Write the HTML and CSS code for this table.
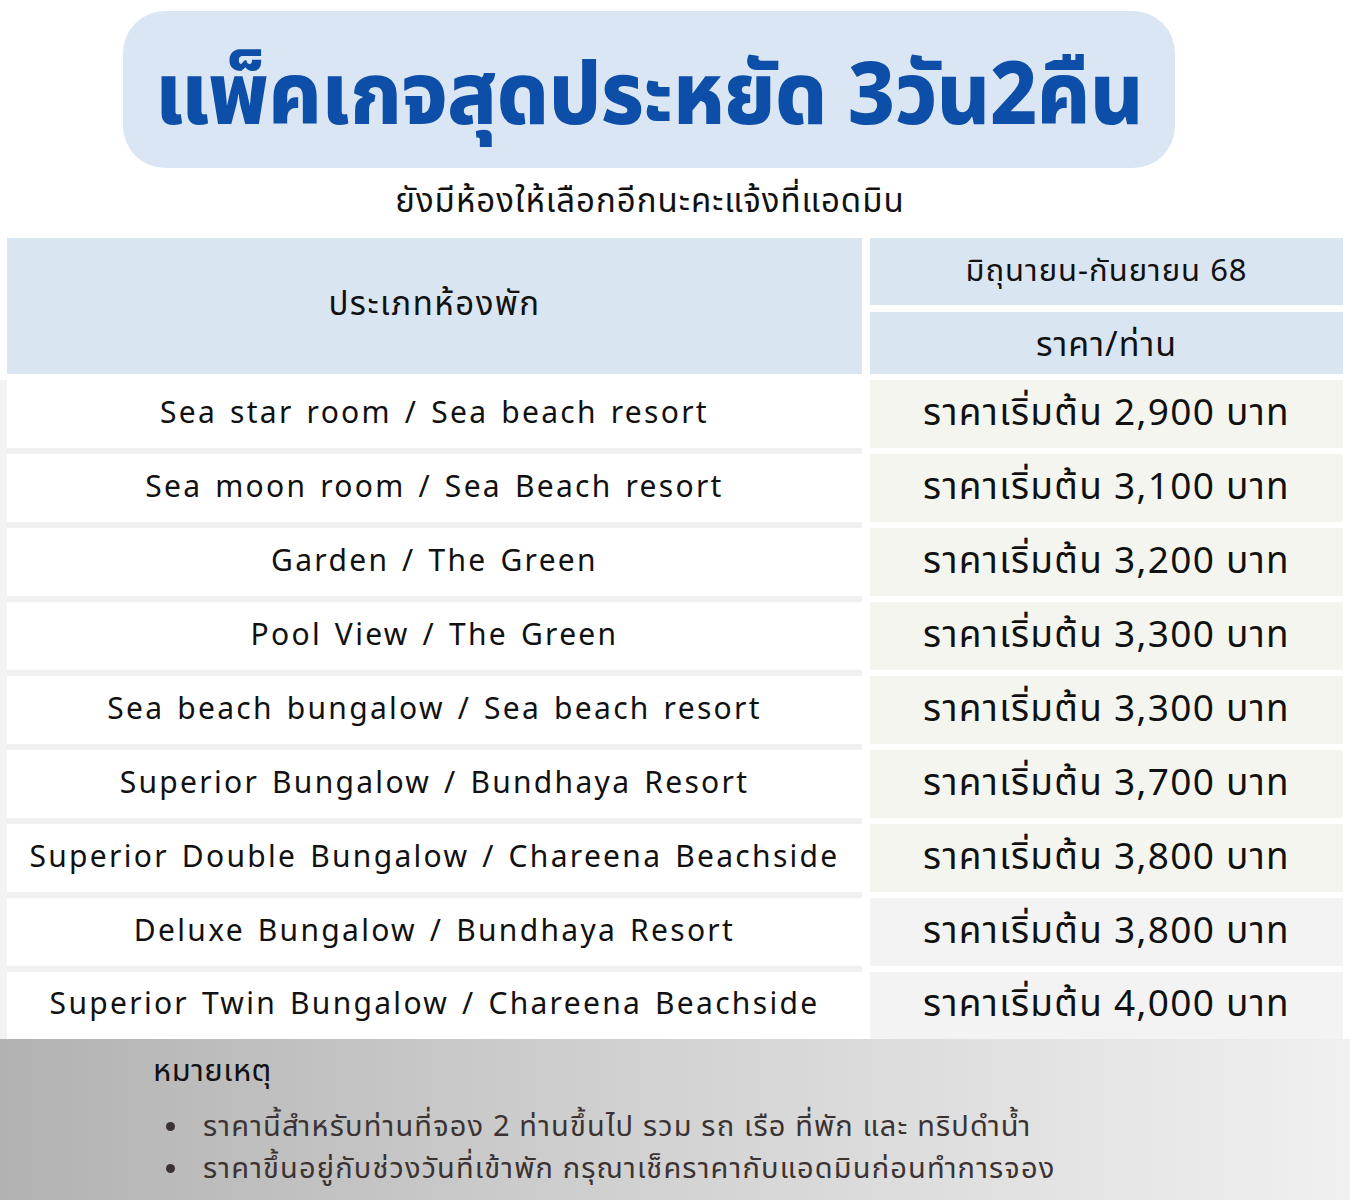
FILE: index.html
```html
<!DOCTYPE html>
<html lang="th">
<head>
<meta charset="utf-8">
<title>แพ็คเกจสุดประหยัด 3วัน2คืน</title>
<link rel="stylesheet" href="styles.css">
</head>
<body>
<div class="page">
  <div class="hero"><h1 class="hero-title">แพ็คเกจสุดประหยัด 3วัน2คืน</h1></div>
  <p class="subtitle">ยังมีห้องให้เลือกอีกนะคะแจ้งที่แอดมิน</p>

  <div class="table">
    <div class="head-left">ประเภทห้องพัก</div>
    <div class="head-right">
      <div class="head-cell head-period">มิถุนายน-กันยายน 68</div>
      <div class="head-cell head-price">ราคา/ท่าน</div>
    </div>

    <div class="cell-room">Sea star room / Sea beach resort</div>
    <div class="cell-price">ราคาเริ่มต้น 2,900 บาท</div>

    <div class="cell-room">Sea moon room / Sea Beach resort</div>
    <div class="cell-price">ราคาเริ่มต้น 3,100 บาท</div>

    <div class="cell-room">Garden / The Green</div>
    <div class="cell-price">ราคาเริ่มต้น 3,200 บาท</div>

    <div class="cell-room">Pool View / The Green</div>
    <div class="cell-price">ราคาเริ่มต้น 3,300 บาท</div>

    <div class="cell-room">Sea beach bungalow / Sea beach resort</div>
    <div class="cell-price">ราคาเริ่มต้น 3,300 บาท</div>

    <div class="cell-room">Superior Bungalow / Bundhaya Resort</div>
    <div class="cell-price">ราคาเริ่มต้น 3,700 บาท</div>

    <div class="cell-room">Superior Double Bungalow / Chareena Beachside</div>
    <div class="cell-price">ราคาเริ่มต้น 3,800 บาท</div>

    <div class="cell-room">Deluxe Bungalow / Bundhaya Resort</div>
    <div class="cell-price cell-grey">ราคาเริ่มต้น 3,800 บาท</div>

    <div class="cell-room cell-last">Superior Twin Bungalow / Chareena Beachside</div>
    <div class="cell-price cell-grey cell-last">ราคาเริ่มต้น 4,000 บาท</div>
  </div>

  <div class="notes">
    <div class="notes-title">หมายเหตุ</div>
    <ul class="notes-list">
      <li>ราคานี้สำหรับท่านที่จอง 2 ท่านขึ้นไป รวม รถ เรือ ที่พัก และ ทริปดำน้ำ</li>
      <li>ราคาขึ้นอยู่กับช่วงวันที่เข้าพัก กรุณาเช็คราคากับแอดมินก่อนทำการจอง</li>
    </ul>
  </div>
</div>
</body>
</html>
```

FILE: styles.css
```css
* { box-sizing: border-box; }
html, body { margin: 0; padding: 0; background: #ffffff; }
body {
  font-family: "Noto Sans", "Noto Sans Thai", "Open Sans", sans-serif;
  color: #111111;
}
.page { width: 1350px; height: 1200px; overflow: hidden; }

.hero {
  margin: 11px 0 0 123px;
  width: 1052px;
  height: 157px;
  border-radius: 42px;
  background: #dbe6f4;
  display: flex;
  align-items: center;
  justify-content: center;
}
.hero-title {
  margin: 0;
  font-size: 82px;
  font-weight: 800;
  color: #0c4ea8;
  line-height: 1;
  letter-spacing: -0.5px;
  transform: scaleY(1.06);
}

.subtitle {
  margin: 0;
  height: 70px;
  padding-right: 50px;
  text-align: center;
  font-size: 33px;
  letter-spacing: 1px;
  line-height: 64px;
  color: #111;
}

.table {
  margin-left: 7px;
  display: grid;
  grid-template-columns: 855px 473px;
  grid-template-rows: 142px repeat(8, 74px) 67px;
  column-gap: 8px;
}
.head-left {
  grid-row: 1;
  align-self: start;
  height: 136px;
  background: #dae5f2;
  display: flex;
  align-items: center;
  justify-content: center;
  font-size: 33px;
  letter-spacing: 1.5px;
  padding-bottom: 2px;
}
.head-right {
  grid-row: 1;
  align-self: start;
  height: 136px;
  display: flex;
  flex-direction: column;
  gap: 7px;
}
.head-cell {
  background: #dae5f2;
  display: flex;
  align-items: center;
  justify-content: center;
}
.head-period { height: 67px; font-size: 31px; letter-spacing: 1px; }
.head-price { flex: 1; font-size: 34px; letter-spacing: 1px; padding-top: 4px; }

.cell-room {
  background: #ffffff;
  border-bottom: 6px solid #f0f0f0;
  box-shadow: -7px 0 0 #f3f3f3;
  display: flex;
  align-items: center;
  justify-content: center;
  font-size: 30px;
  letter-spacing: 2.3px;
  word-spacing: 2.8px;
  padding-bottom: 6px;
}
.cell-price {
  background: #f4f5ef;
  border-bottom: 6px solid #ffffff;
  display: flex;
  align-items: center;
  justify-content: center;
  font-size: 37px;
  letter-spacing: 1.3px;
  padding-bottom: 2px;
}
.cell-grey { background: #f3f3f3; }
.cell-last { border-bottom: 0; }

.notes {
  height: 162px;
  background: linear-gradient(to right, #b2b2b2 0%, #d0d0d0 45%, #f0f0f0 100%);
  padding: 8px 0 0 153px;
}
.notes-title {
  font-size: 31px;
  letter-spacing: 0.5px;
  line-height: 44px;
  color: #111;
}
.notes-list {
  margin: 13px 0 0 0;
  padding: 0;
  list-style: none;
  font-size: 29px;
  letter-spacing: 1.15px;
  line-height: 42px;
  color: #3b3333;
}
.notes-list li {
  display: flex;
  align-items: center;
}
.notes-list li::before {
  content: "";
  flex: none;
  width: 9px;
  height: 9px;
  margin: 2px 28px 0 13px;
  border-radius: 50%;
  background: #3b3333;
}
```
